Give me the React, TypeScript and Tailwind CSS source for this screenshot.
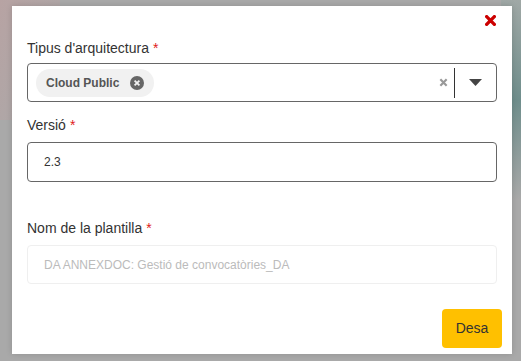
import React from 'react';

const Req = () => <span className="text-[#e02020] ml-1">*</span>;

export default function App() {
  return (
    <div className="w-[521px] h-[361px] overflow-hidden relative bg-[#a9a9a9] font-['Liberation_Sans',Arial,sans-serif]">
      {/* blurred backdrop tints */}
      <div className="absolute left-0 top-0 w-[60px] h-[120px] bg-gradient-to-br from-[#b7a3a3] to-transparent" />
      <div className="absolute right-0 top-0 w-[20px] h-[200px] bg-gradient-to-b from-[#a0a8a6] via-[#6f8e8c] to-[#a9a9a9]" />
      <div className="absolute left-[12px] top-[6px] w-[500px] h-[348px] bg-white shadow-[0_0_6px_rgba(0,0,0,0.15)] flex flex-col px-[15px]">
        <div className="flex justify-end h-[22px] pt-[9px] pr-[1px]">
          <svg width="11" height="11" viewBox="0 0 10 10">
            <path d="M1.5 1.5 L8.5 8.5 M8.5 1.5 L1.5 8.5" stroke="#cc0000" strokeWidth="3" strokeLinecap="square" />
          </svg>
        </div>
        <label className="mt-[12px] text-[14px] leading-[16px] text-[#333]">
          Tipus d'arquitectura<Req />
        </label>
        <div className="mt-[7px] h-[39px] border border-[#666] rounded-[4px] flex items-center pl-[8px]">
          <div className="h-[28px] rounded-full bg-[#f1f1f1] flex items-center pl-[10px] pr-[10px] gap-[11px]">
            <span className="text-[12px] font-bold text-[#555]">Cloud Public</span>
            <svg width="14" height="14" viewBox="0 0 14 14">
              <circle cx="7" cy="7" r="7" fill="#666" />
              <path d="M4.6 4.6 L9.4 9.4 M9.4 4.6 L4.6 9.4" stroke="#f1f1f1" strokeWidth="1.8" />
            </svg>
          </div>
          <div className="flex-1" />
          <svg width="9" height="9" viewBox="0 0 10 10" className="mr-[6px]">
            <path d="M1.5 1.5 L8.5 8.5 M8.5 1.5 L1.5 8.5" stroke="#999" strokeWidth="2.4" />
          </svg>
          <div className="w-px h-[30px] bg-[#333]" />
          <div className="w-[41px] flex justify-center">
            <svg width="13" height="7" viewBox="0 0 13 7">
              <path d="M0 0 L13 0 L6.5 7 Z" fill="#444" />
            </svg>
          </div>
        </div>
        <label className="mt-[15px] text-[14px] leading-[16px] text-[#333]">
          Versió<Req />
        </label>
        <div className="mt-[9px] h-[40px] border border-[#666] rounded-[4px] flex items-center pl-[16px] text-[12px] text-[#333]">
          2.3
        </div>
        <label className="mt-[38px] text-[14px] leading-[16px] text-[#333]">
          Nom de la plantilla<Req />
        </label>
        <div className="mt-[9px] h-[39px] border border-[#efefef] rounded-[4px] flex items-center pl-[16px] text-[12px] text-[#bbb]">
          DA ANNEXDOC: Gestió de convocatòries_DA
        </div>
        <div className="flex justify-end mt-[25px] -mr-[5px]">
          <button className="w-[60px] h-[39px] bg-[#ffc000] rounded-[4px] text-[14px] text-[#333]">Desa</button>
        </div>
      </div>
    </div>
  );
}
